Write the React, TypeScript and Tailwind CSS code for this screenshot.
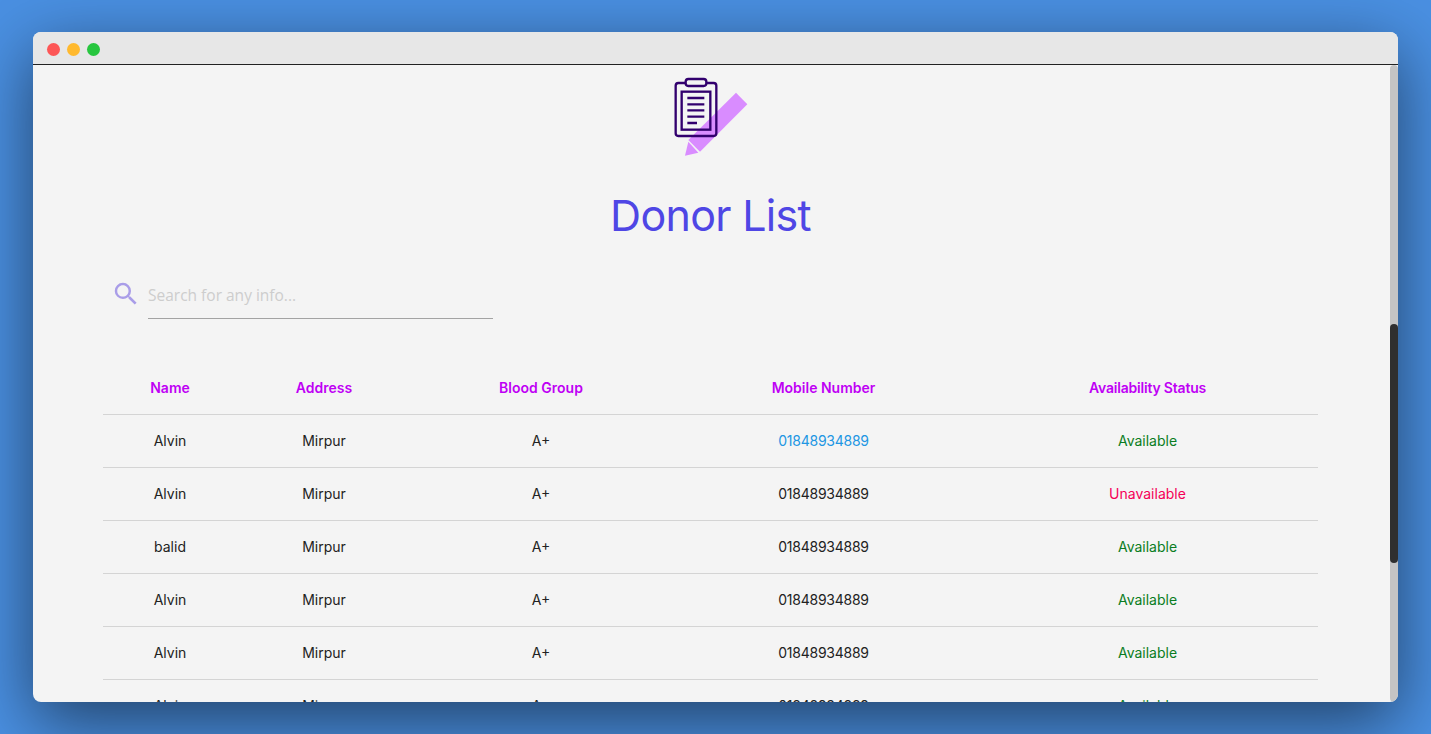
const rows = [
  { name: "Alvin", available: true, linked: true },
  { name: "Alvin", available: false, linked: false },
  { name: "balid", available: true, linked: false },
  { name: "Alvin", available: true, linked: false },
  { name: "Alvin", available: true, linked: false },
  { name: "Alvin", available: true, linked: false },
]

function ListIcon() {
  return (
    <svg viewBox="0 15 429 315" className="block h-[105px] w-[143px]">
      <path d="M288 98 L322 133 L180 275 L145 240 Z" fill="#d98cff" />
      <path d="M145 245 L175 278 L135 287 Z" fill="#d98cff" />
      <g fill="none" stroke="#32006e" strokeWidth="7">
        <rect x="107" y="69" width="122" height="159" rx="8" />
        <rect x="137" y="57" width="62" height="21" rx="8" fill="#f4f4f4" />
        <rect x="125" y="95" width="86" height="114" />
        <path d="M142 114H193M142 133H193M142 151H193M142 170H193M142 189H171" />
      </g>
    </svg>
  )
}

export default function App() {
  return (
    <div className="flex h-[734px] w-full items-start overflow-hidden bg-[#4a90e2] pt-8 pl-[33px] font-['Inter',sans-serif]">
      <div className="flex h-[670px] w-[1365px] flex-col overflow-hidden rounded-[8px] bg-[#f4f4f4] shadow-[0_20px_68px_rgba(0,0,0,0.55)]">
        {/* Title bar */}
        <div className="flex h-[33px] shrink-0 items-center gap-2 border-b border-[#222] bg-[#e7e7e7] pt-[2px] pl-[14px]">
          <span className="h-[13px] w-[13px] rounded-full bg-[#fd5656]" />
          <span className="ml-[-1px] h-[13px] w-[13px] rounded-full bg-[#ffb92e]" />
          <span className="ml-[-1px] h-[13px] w-[13px] rounded-full bg-[#27c63f]" />
        </div>

        <div className="flex min-h-0 flex-1">
          <main className="min-w-0 flex-1 overflow-hidden">
            <div className="flex justify-center">
              <ListIcon />
            </div>
            <h1 className="mt-[19px] pr-[2px] text-center text-[43px] leading-[52px] font-normal tracking-[-0.7px] text-[#4f46e5]">
              Donor List
            </h1>

            {/* Search */}
            <div className="mt-[33px] ml-[78px] flex items-start gap-[7px]">
              <svg viewBox="0 0 24 24" className="mt-[5px] h-[30px] w-[30px] fill-[#a99de8]">
                <path d="M15.5 14h-.79l-.28-.27A6.47 6.47 0 0 0 16 9.5 6.5 6.5 0 1 0 9.5 16c1.61 0 3.09-.59 4.23-1.57l.27.28v.79l5 4.99L20.49 19l-4.99-5zm-6 0C7.01 14 5 11.99 5 9.5S7.01 5 9.5 5 14 7.01 14 9.5 11.99 14 9.5 14z" />
              </svg>
              <div className="flex h-[45px] w-[345px] items-center border-b border-[#a3a3a3] pb-px font-['Open_Sans',sans-serif] text-[15.5px] text-[#cdcdcd]">
                Search for any info...
              </div>
            </div>

            {/* Donors */}
            <table className="mt-[42px] ml-[70px] w-[1215px] table-fixed border-collapse text-center text-sm text-[#222]">
              <colgroup>
                <col className="w-[134px]" />
                <col className="w-[174px]" />
                <col className="w-[260px]" />
                <col className="w-[305px]" />
                <col className="w-[342px]" />
              </colgroup>
              <thead>
                <tr className="h-[53px] border-b border-[#d4d4d4] text-[#bf00f5]">
                  <th className="pt-px font-semibold">Name</th>
                  <th className="pt-px font-semibold">Address</th>
                  <th className="pt-px font-semibold">Blood Group</th>
                  <th className="pt-px font-semibold">Mobile Number</th>
                  <th className="pt-px pl-px font-semibold tracking-[-0.2px]">Availability Status</th>
                </tr>
              </thead>
              <tbody>
                {rows.map((row, i) => (
                  <tr key={i} className="h-[53px] border-b border-[#d4d4d4]">
                    <td>{row.name}</td>
                    <td>Mirpur</td>
                    <td>A+</td>
                    <td className={row.linked ? "tracking-[-0.25px] text-[#2196e3]" : "tracking-[-0.25px]"}>01848934889</td>
                    <td className={row.available ? "pl-px text-[#0a7d22]" : "pl-px text-[#f50057]"}>
                      {row.available ? "Available" : "Unavailable"}
                    </td>
                  </tr>
                ))}
              </tbody>
            </table>
          </main>

          {/* Scrollbar */}
          <div className="w-2 shrink-0 rounded-t-[4px] rounded-b-[4px] bg-[#c4c4c4] pt-[259px]">
            <div className="h-[239px] rounded-[4px] bg-[#2f2f2f]" />
          </div>
        </div>
      </div>
    </div>
  )
}
